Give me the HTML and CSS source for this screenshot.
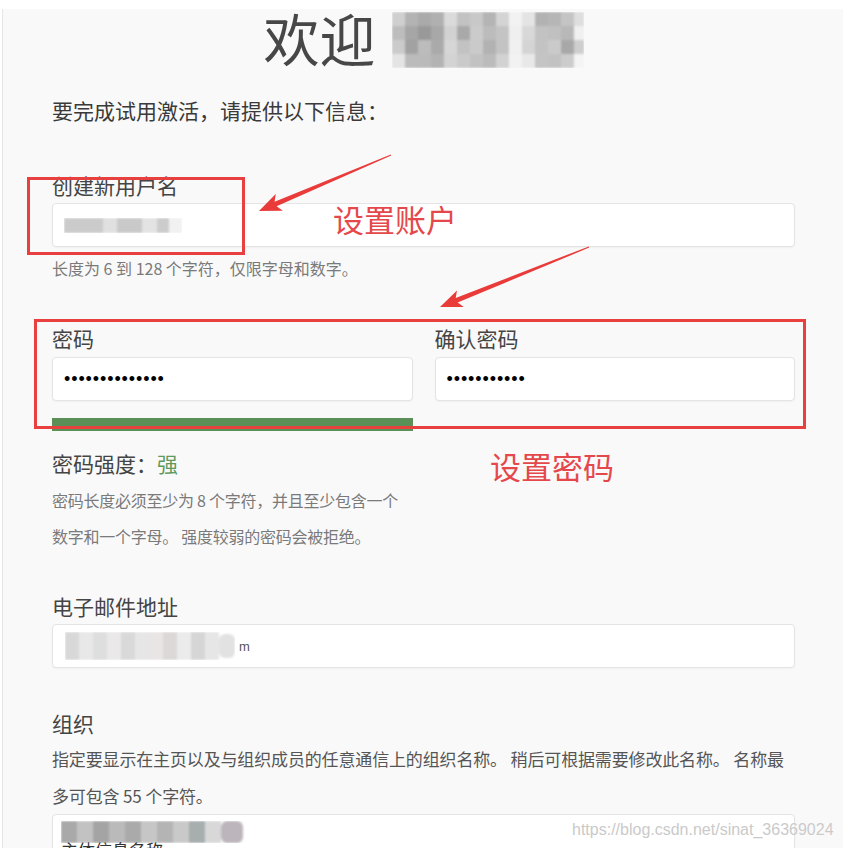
FILE: index.html
```html
<!DOCTYPE html>
<html lang="zh-CN">
<head>
<meta charset="utf-8">
<title>欢迎</title>
<link rel="stylesheet" href="styles.css">
</head>
<body>
<div class="page">
  <h1 class="title">
    <span class="title-text">欢迎</span>
    <svg class="mosaic-title" width="192" height="56" viewBox="0 0 192 56">
      <g filter="url(#soft)">
        <rect x="0" y="0" width="13" height="14" fill="#cfcfcf"/><rect x="13" y="0" width="13" height="14" fill="#b3b3b3"/><rect x="26" y="0" width="13" height="14" fill="#aaaaaa"/><rect x="39" y="0" width="13" height="14" fill="#b0b0b0"/><rect x="52" y="0" width="13" height="14" fill="#dadada"/><rect x="65" y="0" width="13" height="14" fill="#c2c2c2"/><rect x="78" y="0" width="13" height="14" fill="#c8c8c8"/><rect x="91" y="0" width="13" height="14" fill="#b4b4b4"/><rect x="104" y="0" width="13" height="14" fill="#d4d4d4"/><rect x="117" y="0" width="13" height="14" fill="#f2f2f2"/><rect x="130" y="0" width="13" height="14" fill="#e4e4e4"/><rect x="143" y="0" width="13" height="14" fill="#b2b2b2"/><rect x="156" y="0" width="13" height="14" fill="#b6b6b6"/><rect x="169" y="0" width="13" height="14" fill="#c4c4c4"/><rect x="182" y="0" width="10" height="14" fill="#dedede"/>
        <rect x="0" y="14" width="13" height="14" fill="#bdbdbd"/><rect x="13" y="14" width="13" height="14" fill="#a6a6a6"/><rect x="26" y="14" width="13" height="14" fill="#999999"/><rect x="39" y="14" width="13" height="14" fill="#a8a8a8"/><rect x="52" y="14" width="13" height="14" fill="#d2d2d2"/><rect x="65" y="14" width="13" height="14" fill="#a9a9a9"/><rect x="78" y="14" width="13" height="14" fill="#cbcbcb"/><rect x="91" y="14" width="13" height="14" fill="#bcbcbc"/><rect x="104" y="14" width="13" height="14" fill="#c4c4c4"/><rect x="117" y="14" width="13" height="14" fill="#efefef"/><rect x="130" y="14" width="13" height="14" fill="#d8d8d8"/><rect x="143" y="14" width="13" height="14" fill="#c2c2c2"/><rect x="156" y="14" width="13" height="14" fill="#c0c0c0"/><rect x="169" y="14" width="13" height="14" fill="#b8b8b8"/><rect x="182" y="14" width="10" height="14" fill="#f0f0f0"/>
        <rect x="0" y="28" width="13" height="14" fill="#cbcbcb"/><rect x="13" y="28" width="13" height="14" fill="#a2a2a2"/><rect x="26" y="28" width="13" height="14" fill="#bcbcbc"/><rect x="39" y="28" width="13" height="14" fill="#aaaaaa"/><rect x="52" y="28" width="13" height="14" fill="#d6d6d6"/><rect x="65" y="28" width="13" height="14" fill="#c2c2c2"/><rect x="78" y="28" width="13" height="14" fill="#cacaca"/><rect x="91" y="28" width="13" height="14" fill="#b2b2b2"/><rect x="104" y="28" width="13" height="14" fill="#c3c3c3"/><rect x="117" y="28" width="13" height="14" fill="#f0f0f0"/><rect x="130" y="28" width="13" height="14" fill="#d4d4d4"/><rect x="143" y="28" width="13" height="14" fill="#c3c3c3"/><rect x="156" y="28" width="13" height="14" fill="#cacaca"/><rect x="169" y="28" width="13" height="14" fill="#a8a8a8"/><rect x="182" y="28" width="10" height="14" fill="#cecece"/>
        <rect x="0" y="42" width="13" height="14" fill="#e4e4e4"/><rect x="13" y="42" width="13" height="14" fill="#bbbbbb"/><rect x="26" y="42" width="13" height="14" fill="#bababa"/><rect x="39" y="42" width="13" height="14" fill="#b3b3b3"/><rect x="52" y="42" width="13" height="14" fill="#d3d3d3"/><rect x="65" y="42" width="13" height="14" fill="#cacaca"/><rect x="78" y="42" width="13" height="14" fill="#c2c2c2"/><rect x="91" y="42" width="13" height="14" fill="#bbbbbb"/><rect x="104" y="42" width="13" height="14" fill="#d2d2d2"/><rect x="117" y="42" width="13" height="14" fill="#f2f2f2"/><rect x="130" y="42" width="13" height="14" fill="#e8e8e8"/><rect x="143" y="42" width="13" height="14" fill="#c4c4c4"/><rect x="156" y="42" width="13" height="14" fill="#c2c2c2"/><rect x="169" y="42" width="13" height="14" fill="#cccccc"/><rect x="182" y="42" width="10" height="14" fill="#f4f4f4"/>
      </g>
      <defs><filter id="soft" x="-5%" y="-10%" width="110%" height="120%"><feGaussianBlur stdDeviation="0.8"/></filter></defs>
    </svg>
  </h1>

  <p class="intro">要完成试用激活，请提供以下信息：</p>

  <div class="field field-user">
    <div class="label">创建新用户名</div>
    <div class="input">
      <svg class="mosaic" width="118" height="15" viewBox="0 0 118 15">
        <g filter="url(#soft)">
          <rect x="0" y="0" width="39" height="15" fill="#cbcbcb"/>
          <rect x="39" y="0" width="14" height="15" fill="#e0e0e0"/>
          <rect x="53" y="0" width="25" height="15" fill="#c9c9c9"/>
          <rect x="78" y="0" width="15" height="15" fill="#e3e3e3"/>
          <rect x="93" y="0" width="12" height="15" fill="#cccccc"/>
          <rect x="105" y="0" width="13" height="15" fill="#f1f1f1"/>
        </g>
      </svg>
    </div>
    <div class="hint">长度为 6 到 128 个字符，仅限字母和数字。</div>
  </div>

  <div class="pw-row">
    <div class="pw-col">
      <div class="label">密码</div>
      <div class="input"><span class="dots">••••••••••••••</span></div>
      <div class="strength-bar"></div>
    </div>
    <div class="pw-col">
      <div class="label">确认密码</div>
      <div class="input"><span class="dots">•••••••••••</span></div>
    </div>
  </div>

  <div class="strength">密码强度：<span class="strong">强</span></div>
  <div class="hint hint-tall">密码长度必须至少为 8 个字符，并且至少包含一个<br>数字和一个字母。 强度较弱的密码会被拒绝。</div>

  <div class="field field-email">
    <div class="label">电子邮件地址</div>
    <div class="input input-email">
      <svg class="mosaic" width="170" height="28" viewBox="0 0 170 28">
        <g filter="url(#soft)">
          <rect x="0" y="0" width="14" height="28" fill="#d8d8d8"/>
          <rect x="14" y="0" width="14" height="28" fill="#e8e8e8"/>
          <rect x="28" y="0" width="14" height="28" fill="#dedede"/>
          <rect x="42" y="0" width="14" height="28" fill="#eae8e8"/>
          <rect x="56" y="0" width="14" height="28" fill="#d9d9d9"/>
          <rect x="70" y="0" width="14" height="28" fill="#e6e6e6"/>
          <rect x="84" y="0" width="14" height="28" fill="#e9e5e5"/>
          <rect x="98" y="0" width="14" height="28" fill="#dcd8d8"/>
          <rect x="112" y="0" width="14" height="28" fill="#ebebeb"/>
          <rect x="126" y="0" width="14" height="28" fill="#d6d6d6"/>
          <rect x="140" y="0" width="14" height="28" fill="#e6e6e6"/>
          <rect x="154" y="2" width="16" height="24" rx="6" fill="#e2e2e2"/>
        </g>
      </svg>
      <span class="email-tail">m</span>
    </div>
  </div>

  <div class="field field-org">
    <div class="label">组织</div>
    <div class="desc">指定要显示在主页以及与组织成员的任意通信上的组织名称。 稍后可根据需要修改此名称。 名称最<br>多可包含 55 个字符。</div>
    <div class="input input-org">
      <svg class="mosaic" width="184" height="22" viewBox="0 0 184 22">
        <g filter="url(#soft)">
          <rect x="0" y="0" width="16" height="22" fill="#a9a9a9"/>
          <rect x="16" y="0" width="16" height="22" fill="#c2c2c2"/>
          <rect x="32" y="0" width="16" height="22" fill="#a4a4a4"/>
          <rect x="48" y="0" width="16" height="22" fill="#bababa"/>
          <rect x="64" y="0" width="16" height="22" fill="#aaaaaa"/>
          <rect x="80" y="0" width="16" height="22" fill="#c6c6c6"/>
          <rect x="96" y="0" width="16" height="22" fill="#b4b4b4"/>
          <rect x="112" y="0" width="16" height="22" fill="#c9c9c9"/>
          <rect x="128" y="0" width="16" height="22" fill="#a6aeae"/>
          <rect x="144" y="0" width="16" height="22" fill="#d8d8d8"/>
          <rect x="160" y="0" width="22" height="22" rx="6" fill="#bcb6bc"/>
        </g>
      </svg>
      <span class="org-text">主体信息名称</span>
    </div>
  </div>
</div>

<svg class="annotations" width="843" height="848" viewBox="0 0 843 848">
  <rect x="28.5" y="178.5" width="215" height="75" fill="none" stroke="#e8403e" stroke-width="3"/>
  <rect x="35.5" y="320.5" width="769" height="107" fill="none" stroke="#e8403e" stroke-width="3"/>
  <polygon fill="#ea3b3b" points="391.2,155.6 276.6,206.3 282.8,210.7 259,211 275.7,194.1 274.6,201.7 390.8,154.4"/>
  <polygon fill="#ea3b3b" points="589.2,247.6 457.6,302.6 463.8,307.1 440,307 457,290.4 455.7,297.9 588.8,246.4"/>
</svg>
<div class="note note-account">设置账户</div>
<div class="note note-password">设置密码</div>
<div class="watermark">https://blog.csdn.net/sinat_36369024</div>
</body>
</html>
```

FILE: styles.css
```css
html, body {
  margin: 0;
  padding: 0;
  background: #ffffff;
}

body {
  font-family: "Noto Sans CJK SC", "Noto Sans", sans-serif;
  width: 843px;
  height: 848px;
  overflow: hidden;
  position: relative;
}

.page {
  margin: 9px 0 0 2px;
  border-left: 1px solid #e6e6e6;
  background: #f9f9f9;
  padding: 0 48px 0 49px;
  height: 839px;
  box-sizing: border-box;
}

.title {
  margin: 0;
  display: flex;
  justify-content: center;
  align-items: flex-start;
  gap: 16px;
  font-family: "Liberation Sans", "Noto Sans CJK SC", sans-serif;
  font-size: 56px;
  font-weight: 400;
  line-height: 66px;
  color: #474747;
  height: 66px;
}

.title-text {
  display: block;
}

.mosaic-title {
  display: block;
  margin-top: 3px;
}

.intro {
  margin: 20px 0 0;
  font-size: 21px;
  line-height: 30px;
  color: #3a3a3a;
}

.label {
  font-size: 21px;
  line-height: 30px;
  color: #444444;
}

.input {
  box-sizing: border-box;
  height: 44px;
  margin-top: 3px;
  background: #ffffff;
  border: 1px solid #e4e4e4;
  border-radius: 4px;
  box-shadow: 0 1px 2px rgba(0, 0, 0, 0.04);
  display: flex;
  align-items: center;
  padding: 0 11px;
}

.mosaic {
  display: block;
  flex: none;
}

.hint {
  margin-top: 9px;
  font-size: 16px;
  line-height: 24px;
  color: #7a7a7a;
}

.field-user {
  margin-top: 45px;
}

.pw-row {
  margin-top: 43px;
  display: grid;
  grid-template-columns: 1fr 1fr;
  column-gap: 22px;
}

.pw-row .input {
  margin-top: 4px;
}

.dots {
  font-family: "Liberation Sans", sans-serif;
  font-size: 18px;
  line-height: 18px;
  letter-spacing: 0.9px;
  color: #000000;
}

.strength-bar {
  margin-top: 17px;
  height: 13px;
  background: #5b8f58;
}

.strength {
  margin-top: 17px;
  font-size: 21px;
  line-height: 30px;
  color: #444444;
}

.strong {
  color: #5f9a5c;
}

.hint-tall {
  margin-top: 4px;
  line-height: 36px;
  letter-spacing: -0.25px;
}

.field-email {
  margin-top: 37px;
}

.input-email {
  padding-left: 12px;
}

.email-tail {
  font-family: "Liberation Sans", sans-serif;
  font-size: 13px;
  color: #555555;
  margin-left: 4px;
}

.field-org {
  margin-top: 40px;
}

.desc {
  margin-top: 3px;
  font-size: 17px;
  line-height: 36.5px;
  letter-spacing: -0.15px;
  color: #555555;
}

.input-org {
  margin-top: 0;
  height: 60px;
  flex-direction: column;
  align-items: flex-start;
  justify-content: flex-start;
  padding: 6px 8px 0;
}

.org-text {
  margin-top: -4px;
  font-size: 17px;
  line-height: 22px;
  color: #333333;
}

.annotations {
  position: absolute;
  left: 0;
  top: 0;
  pointer-events: none;
}

.note {
  position: absolute;
  font-size: 31px;
  line-height: 31px;
  color: #e5484b;
  white-space: nowrap;
}

.note-account {
  left: 333px;
  top: 203px;
}

.note-password {
  left: 490px;
  top: 450px;
}

.watermark {
  position: absolute;
  left: 572px;
  top: 820px;
  font-family: "Liberation Sans", sans-serif;
  font-size: 16px;
  line-height: 20px;
  color: #cacaca;
  text-shadow: 0 0 1px #ffffff;
  white-space: nowrap;
}
```
